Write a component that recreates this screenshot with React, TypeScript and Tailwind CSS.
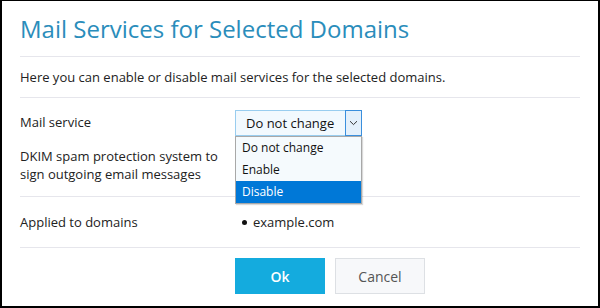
import React from "react";

export default function App() {
  return (
    <div
      className="w-[600px] h-[308px] bg-white border-black border-t border-l-2 border-r-2 border-b-2 px-[18px] text-[#222] overflow-hidden"
      style={{ fontFamily: '"Open Sans", "Liberation Sans", sans-serif' }}
    >
      <h1 className="mt-[12px] text-[24px] leading-[32px] text-[#2a8dbb] font-normal">
        Mail Services for Selected Domains
      </h1>
      <div className="mt-[11px] h-px bg-[#e6e6ec]" />
      <p className="pt-[11px] pb-[11px] text-[13px] leading-[18px]">
        Here you can enable or disable mail services for the selected domains.
      </p>
      <div className="h-px bg-[#e6e6ec]" />

      <div className="flex pt-[12px]">
        <div className="w-[215px] text-[13px] leading-[18px] pt-[3px]">Mail service</div>
        <div className="relative">
          <div className="flex h-[26px] w-[127px] border border-[#99cdef] bg-[#f2f9fe]">
            <div className="flex-1 pl-[10px] text-[13px] leading-[24px] text-[#111]">Do not change</div>
            <div className="w-[17px] -my-px -mr-px border border-[#3a8fdd] bg-[#e4f0fb] flex items-center justify-center">
              <svg width="9" height="6" viewBox="0 0 9 6">
                <path d="M1 1.2 L4.5 4.6 L8 1.2" fill="none" stroke="#333" strokeWidth="1" />
              </svg>
            </div>
          </div>
          <div className="absolute left-0 top-[26px] w-[127px] border border-[#a8a8a8] bg-[#f5fafd] text-[12px] leading-[22px] text-[#111] z-10 shadow-[1px_1px_1px_rgba(0,0,0,0.15)]">
            <div className="pl-[6px]">Do not change</div>
            <div className="pl-[6px]">Enable</div>
            <div className="pl-[6px] bg-[#0078d7] text-white">Disable</div>
          </div>
        </div>
      </div>

      <div className="flex pt-[11px] pb-[13px]">
        <div className="w-[215px] text-[13px] leading-[18px]">
          DKIM spam protection system to sign outgoing email messages
        </div>
      </div>
      <div className="h-px bg-[#e6e6ec]" />

      <div className="flex pt-[16px] pb-[16px] text-[13px] leading-[18px]">
        <div className="w-[215px]">Applied to domains</div>
        <div className="flex items-center">
          <span className="ml-[7px] w-[5px] h-[5px] rounded-full bg-[#111]" />
          <span className="ml-[6px]">example.com</span>
        </div>
      </div>
      <div className="h-px bg-[#e6e6ec]" />

      <div className="flex pt-[10px] pl-[215px] gap-[10px]">
        <button className="w-[90px] h-[36px] bg-[#14abde] text-white text-[14px] font-semibold">Ok</button>
        <button className="w-[90px] h-[36px] bg-[#f7f8fa] border border-[#dde0e4] text-[#555] text-[14px]">Cancel</button>
      </div>
    </div>
  );
}
